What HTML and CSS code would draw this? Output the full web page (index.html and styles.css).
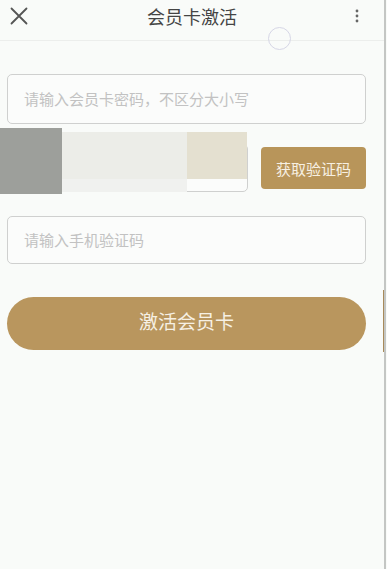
FILE: index.html
```html
<!DOCTYPE html>
<html lang="zh">
<head>
<meta charset="utf-8">
<link rel="stylesheet" href="styles.css">
</head>
<body>
<div class="page">
  <header class="topbar">
    <svg class="close" width="18" height="18" viewBox="0 0 18 18"><path d="M1.5 1.5 L16.5 16.5 M16.5 1.5 L1.5 16.5" stroke="#555" stroke-width="1.8" fill="none" stroke-linecap="round"/></svg>
    <div class="title">会员卡激活</div>
    <svg class="more" width="4" height="14" viewBox="0 0 4 14"><circle cx="2" cy="2" r="1.4" fill="#666"/><circle cx="2" cy="7" r="1.4" fill="#666"/><circle cx="2" cy="12" r="1.4" fill="#666"/></svg>
    <div class="touch"></div>
  </header>
  <main class="form">
    <div class="field">请输入会员卡密码，不区分大小写</div>
    <div class="row">
      <div class="field short"></div>
      <div class="getcode">获取验证码</div>
      <div class="mask">
        <div class="m-gray"></div>
        <div class="m-light"><div class="m-light-top"></div></div>
        <div class="m-beige"></div>
      </div>
    </div>
    <div class="field">请输入手机验证码</div>
    <div class="submit">激活会员卡</div>
  </main>
  <div class="edge-tint"></div>
</div>
</body>
</html>
```

FILE: styles.css
```css
html, body {
  margin: 0;
  padding: 0;
  background: #f9fbf9;
}
.page {
  position: relative;
  width: 384px;
  height: 569px;
  background: #f9fbf9;
  border-right: 2px solid #c4c6c4;
  font-family: "Noto Sans CJK SC", "Noto Sans", sans-serif;
  overflow: hidden;
}
.topbar {
  position: relative;
  height: 41px;
  border-bottom: 1px solid #eceeec;
  display: flex;
  align-items: center;
  justify-content: space-between;
  padding: 0 25px 0 10px;
  box-sizing: border-box;
}
.close { margin-top: -8px; }
.more { margin-top: -8px; }
.title {
  position: absolute;
  left: 0;
  right: 0;
  top: 3px;
  text-align: center;
  font-size: 18px;
  color: #444;
  line-height: 26px;
  pointer-events: none;
}
.touch {
  position: absolute;
  left: 268px;
  top: 27px;
  width: 21px;
  height: 21px;
  border: 1.5px solid #d6d6e6;
  border-radius: 50%;
}
.form {
  padding: 33px 18px 0 7px;
  display: flex;
  flex-direction: column;
}
.field {
  height: 50px;
  box-sizing: border-box;
  border: 1px solid #cfd0cf;
  border-radius: 5px;
  background: #fbfcfb;
  padding: 0 0 2px 16px;
  display: flex;
  align-items: center;
  font-size: 15px;
  color: #c2c2c2;
}
.row {
  position: relative;
  display: flex;
  align-items: center;
  margin-top: 20px;
  height: 48px;
}
.field.short {
  width: 241px;
  height: 48px;
}
.getcode {
  margin-left: auto;
  width: 105px;
  height: 42px;
  border-radius: 4px;
  background: #b8955a;
  color: #f7f0e2;
  font-size: 15px;
  display: flex;
  align-items: center;
  justify-content: center;
}
.mask {
  position: absolute;
  left: -7px;
  top: -16px;
  display: flex;
  align-items: flex-start;
}
.m-gray {
  width: 62px;
  height: 66px;
  background: #9d9f9b;
}
.m-light {
  width: 125px;
  height: 60px;
  background: #f0f1ef;
  margin-top: 4px;
}
.m-light-top {
  height: 47px;
  background: #ecede8;
}
.m-beige {
  width: 60px;
  height: 47px;
  margin-top: 4px;
  background: #e4e0d0;
}
.row + .field { margin-top: 24px; height: 48px; }
.submit {
  margin-top: 33px;
  height: 53px;
  border-radius: 27px;
  background: #b9965e;
  color: #f6f0e4;
  font-size: 19px;
  padding-bottom: 6px;
  box-sizing: border-box;
  display: flex;
  align-items: center;
  justify-content: center;
}
.edge-tint {
  position: absolute;
  right: -2px;
  top: 290px;
  width: 3px;
  height: 62px;
  background: #a88a5a;
}
```
